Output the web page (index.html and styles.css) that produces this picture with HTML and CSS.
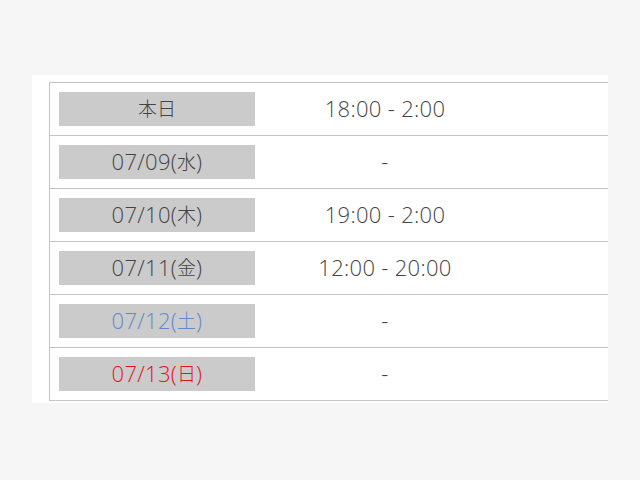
FILE: index.html
```html
<!DOCTYPE html>
<html lang="ja">
<head>
<meta charset="utf-8">
<link rel="stylesheet" href="styles.css">
</head>
<body>
<div class="panel">
  <div class="table">
    <div class="row">
      <div class="day"><span class="label"><span class="jp">本日</span></span></div>
      <div class="time">18:00 - 2:00</div>
    </div>
    <div class="row">
      <div class="day"><span class="label">07/09(<span class="jp">水</span>)</span></div>
      <div class="time">-</div>
    </div>
    <div class="row">
      <div class="day"><span class="label">07/10(<span class="jp">木</span>)</span></div>
      <div class="time">19:00 - 2:00</div>
    </div>
    <div class="row">
      <div class="day"><span class="label">07/11(<span class="jp">金</span>)</span></div>
      <div class="time">12:00 - 20:00</div>
    </div>
    <div class="row">
      <div class="day"><span class="label sat">07/12(<span class="jp">土</span>)</span></div>
      <div class="time">-</div>
    </div>
    <div class="row">
      <div class="day"><span class="label sun">07/13(<span class="jp">日</span>)</span></div>
      <div class="time">-</div>
    </div>
  </div>
</div>
</body>
</html>
```

FILE: styles.css
```css
html, body {
  margin: 0;
  padding: 0;
  background: #f6f6f6;
  width: 640px;
  height: 480px;
  overflow: hidden;
}
body {
  font-family: "Open Sans", "Noto Sans CJK JP", sans-serif;
  font-weight: 300;
  color: #444;
}
.panel {
  margin: 75px 0 0 32px;
  width: 576px;
  background: #fff;
  padding: 7px 0 2px 17px;
  box-sizing: border-box;
}
.table {
  border-left: 1px solid #c4c4c4;
  border-top: 1px solid #c4c4c4;
}
.row {
  display: grid;
  grid-template-columns: 215px 240px 1fr;
  align-items: center;
  height: 52px;
  border-bottom: 1px solid #c4c4c4;
}
.day {
  padding-left: 9px;
}
.label {
  display: flex;
  align-items: center;
  justify-content: center;
  width: 196px;
  height: 34px;
  box-sizing: border-box;
  padding-bottom: 3px;
  background: #cbcbcb;
  font-size: 22px;
  letter-spacing: 0.3px;
  color: #444;
}
.jp {
  font-family: "Noto Sans CJK JP", sans-serif;
  font-weight: 300;
  font-size: 19px;
  letter-spacing: 0;
}
.label.sat { color: #5d8ad0; }
.label.sun { color: #e0161e; }
.time {
  text-align: center;
  font-size: 22px;
  letter-spacing: 0.3px;
  color: #444;
  padding-bottom: 3px;
}
```
